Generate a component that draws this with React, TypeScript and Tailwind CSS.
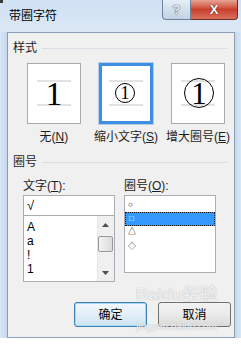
import React from 'react';

const font = "font-['Liberation_Sans','Noto_Sans_CJK_SC',sans-serif]";

function SectionHeader({label}: {label: string}) {
  return (
    <div className="flex items-center h-[14px] pl-[5px] pr-[6px]">
      <span className="text-[12px] leading-[14px] text-[#1e1e1e]">{label}</span>
      <div className="flex-1 h-px bg-[#d8dfe6] ml-[5px]" />
    </div>
  );
}

function PreviewLines() {
  return (
    <>
      <line x1="9" y1="17" x2="43" y2="17" stroke="#c4c4c4" strokeWidth="1" />
      <line x1="9" y1="41" x2="43" y2="41" stroke="#c4c4c4" strokeWidth="1" />
    </>
  );
}

function Preview({kind, selected}: {kind: 'none' | 'small' | 'big'; selected?: boolean}) {
  return (
    <div
      className={
        selected
          ? 'w-[54px] h-[61px] bg-white border-[3px] border-[#3d8fe3] shadow-[0_0_0_1px_#b9cde2] flex items-center justify-center'
          : 'w-[54px] h-[61px] bg-white border border-[#a9a9a9] flex items-center justify-center'
      }
    >
      <svg width="52" height="59" viewBox="0 0 52 59" className="shrink-0">
        <PreviewLines />
        {kind === 'none' && (
          <text x="26" y="41" textAnchor="middle" fontFamily="Liberation Serif, serif" fontSize="33" fill="#000">
            1
          </text>
        )}
        {kind === 'small' && (
          <>
            <circle cx="25" cy="29" r="9.5" fill="none" stroke="#000" strokeWidth="1" />
            <text x="25" y="35" textAnchor="middle" fontFamily="Liberation Serif, serif" fontSize="18" fill="#000">
              1
            </text>
          </>
        )}
        {kind === 'big' && (
          <>
            <circle cx="27" cy="29" r="14.5" fill="none" stroke="#000" strokeWidth="1" />
            <text x="27" y="40" textAnchor="middle" fontFamily="Liberation Serif, serif" fontSize="31" fill="#000">
              1
            </text>
          </>
        )}
      </svg>
    </div>
  );
}

function Arrow({up}: {up?: boolean}) {
  return (
    <svg width="7" height="4" viewBox="0 0 7 4">
      <path d={up ? 'M0 4 L3.5 0 L7 4 Z' : 'M0 0 L3.5 4 L7 0 Z'} fill="#4d4d4d" />
    </svg>
  );
}

export default function App() {
  return (
    <div className={`w-[241px] h-[351px] bg-white relative overflow-hidden ${font}`}>
      {/* title bar */}
      <div className="h-[32px] flex items-start bg-gradient-to-b from-[#d0e1f3] to-[#dbe8f6] relative">
        <div className="absolute left-0 top-0 w-[3px] h-[3px] bg-[#3a3a3a]" />
        <span className="mt-[9px] ml-[9px] text-[12px] leading-[14px] text-black">带圈字符</span>
        <div className="ml-auto mr-[3px] flex">
          <div className="w-[29px] h-[20px] rounded-bl-[4px] border border-t-0 border-[#6f819a] bg-gradient-to-b from-[#e6eef7] via-[#d3dfec] to-[#c2d3e6] flex items-center justify-center">
            <span className="text-[13px] leading-none font-bold text-[#f4f7fb] [text-shadow:0_0_1px_#2b3b55,0_0_1px_#2b3b55]">?</span>
          </div>
          <div className="w-[47px] h-[20px] rounded-br-[4px] border border-t-0 border-l-0 border-[#6b2b22] bg-gradient-to-b from-[#e5a395] via-[#c9402c] to-[#d9705c] flex items-center justify-center">
            <span className="text-[13px] leading-none font-bold text-white [text-shadow:0_0_1px_#4a1208,0_0_1px_#4a1208]">X</span>
          </div>
        </div>
      </div>

      {/* body */}
      <div className="flex h-[306px]">
        <div className="w-[8px] bg-gradient-to-r from-[#d9e7f5] to-[#c5d9ee]" />
        <div className="flex-1 border border-[#8ba0b8] bg-[#f0f0f0] flex flex-col pt-[8px]">
          <SectionHeader label="样式" />

          <div className="grid grid-cols-[72px_72px_72px] pl-[10px] mt-[8px]">
            <div className="flex flex-col items-center">
              <Preview kind="none" />
              <span className="mt-[6px] text-[12px] leading-[14px] text-[#1e1e1e] whitespace-nowrap">
                无(<u>N</u>)
              </span>
            </div>
            <div className="flex flex-col items-center">
              <Preview kind="small" selected />
              <span className="mt-[6px] text-[12px] leading-[14px] text-[#1e1e1e] whitespace-nowrap">
                缩小文字(<u>S</u>)
              </span>
            </div>
            <div className="flex flex-col items-center">
              <Preview kind="big" />
              <span className="mt-[6px] text-[12px] leading-[14px] text-[#1e1e1e] whitespace-nowrap">
                增大圈号(<u>E</u>)
              </span>
            </div>
          </div>

          <div className="mt-[11px]">
            <SectionHeader label="圈号" />
          </div>

          <div className="flex gap-[9px] pl-[15px] mt-[10px]">
            {/* 文字 */}
            <div className="w-[92px] flex flex-col">
              <span className="text-[12px] leading-[14px] text-[#1e1e1e] h-[16px]">
                文字(<u>T</u>):
              </span>
              <div className="h-[21px] bg-white border border-[#abadb3] flex items-center pl-[3px] text-[13px] text-black">
                √
              </div>
              <div className="h-[66px] bg-white border border-t-0 border-[#abadb3] flex">
                <div className="flex-1 flex flex-col pt-[4px] pl-[3px] text-[12px] leading-[14px] text-black">
                  <span>A</span>
                  <span>a</span>
                  <span>!</span>
                  <span>1</span>
                </div>
                <div className="w-[17px] bg-[#f0f0f0] border-l border-[#e6e6e6] flex flex-col items-center">
                  <div className="h-[17px] flex items-center justify-center">
                    <Arrow up />
                  </div>
                  <div className="w-[15px] h-[16px] mt-[3px] rounded-[2px] border border-[#9a9a9a] bg-gradient-to-r from-[#f3f3f3] to-[#dcdcdc]" />
                  <div className="mt-auto h-[17px] flex items-center justify-center">
                    <Arrow />
                  </div>
                </div>
              </div>
            </div>

            {/* 圈号 */}
            <div className="w-[92px] flex flex-col">
              <span className="text-[12px] leading-[14px] text-[#1e1e1e] h-[16px]">
                圈号(<u>O</u>):
              </span>
              <div className="h-[78px] bg-white border border-[#abadb3] flex flex-col pt-[2px] text-[8px] text-black">
                <div className="h-[14px] flex items-center pl-[3px]">○</div>
                <div className="h-[14px] flex items-center pl-[3px] bg-[#3399ff] text-white border border-dotted border-[#1a1a1a]">□</div>
                <div className="h-[14px] flex items-end pb-[2px] pl-[3px]">△</div>
                <div className="h-[14px] flex items-end pb-[1px] pl-[3px]">◇</div>
              </div>
            </div>
          </div>

          <div className="flex justify-end gap-[11px] pr-[3px] mt-[20px]">
            <div className="w-[73px] h-[25px] rounded-[3px] border border-[#3c7fb1] bg-gradient-to-b from-[#f2f8fc] via-[#e3eff8] to-[#cfe3f1] shadow-[inset_0_0_0_1px_#a7d8f5] flex items-center justify-center text-[12px] text-black">
              确定
            </div>
            <div className="w-[73px] h-[25px] rounded-[3px] border border-[#707070] bg-gradient-to-b from-[#f2f2f2] via-[#ebebeb] to-[#d9d9d9] flex items-center justify-center text-[12px] text-black">
              取消
            </div>
          </div>
        </div>
        <div className="w-[7px] bg-gradient-to-r from-[#c5d9ee] to-[#d9e7f5]" />
      </div>

      {/* watermark */}
      <div className="absolute left-[136px] top-[286px] flex flex-col items-center pointer-events-none">
        <span className="text-[17px] font-bold leading-[18px] text-white/80 [text-shadow:0_0_1px_#9aa0a6]">Baidu经验</span>
        <span className="text-[10px] leading-[10px] text-white/80 [text-shadow:0_0_1px_#a0a6ac] mt-[18px]">jingyan.baidu.com</span>
      </div>
    </div>
  );
}
